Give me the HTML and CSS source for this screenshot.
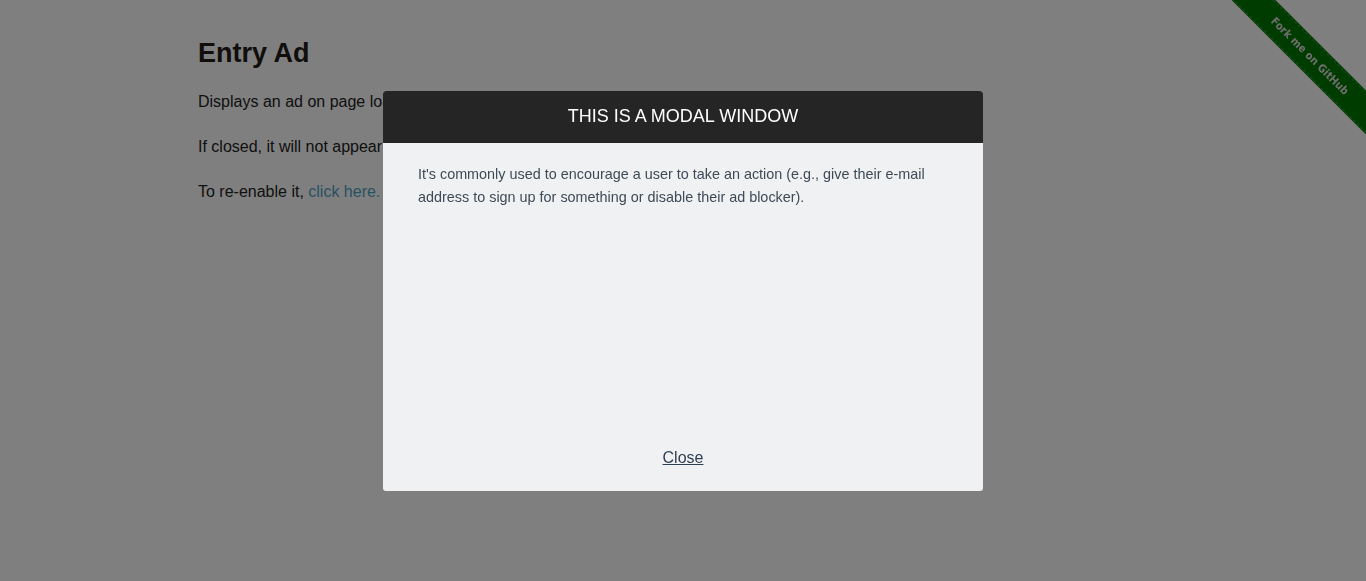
FILE: index.html
```html
<!DOCTYPE html>
<html>
<head>
<meta charset="utf-8">
<link rel="stylesheet" href="styles.css">
</head>
<body>
<div class="ribbon-wrap"><div class="ribbon"><span>Fork me on GitHub</span></div></div>
<div class="page">
  <div class="example">
    <h3 class="title">Entry Ad</h3>
    <p class="para">Displays an ad on page load.</p>
    <p class="para">If closed, it will not appear on subsequent page loads.</p>
    <p class="para">To re-enable it, <a class="link" href="#">click here.</a></p>
  </div>
</div>
<div class="overlay">
  <div class="modal">
    <div class="modal-title"><h3 class="modal-heading">THIS IS A MODAL WINDOW</h3></div>
    <div class="modal-body">
      <p class="modal-text">It's commonly used to encourage a user to take an action (e.g., give their e-mail address to sign up for something or disable their ad blocker).</p>
    </div>
    <div class="modal-footer"><a class="close-link" href="#">Close</a></div>
  </div>
</div>
</body>
</html>
```

FILE: styles.css
```css
html, body {
  margin: 0;
  padding: 0;
  height: 100%;
  overflow: hidden;
  background: #fff;
  font-family: "Liberation Sans", Arial, sans-serif;
  color: #222;
}

.page {
  padding: 0 0 0 198px;
}

.example {
  padding-top: 36px;
}

.title {
  margin: 0 0 23px;
  font-size: 27px;
  line-height: 34px;
  font-weight: bold;
  color: #221a16;
}

.para {
  margin: 0 0 27px;
  font-size: 16px;
  line-height: 18px;
  color: #222;
}

.link {
  color: #4fa4c6;
  text-decoration: none;
}

.ribbon-wrap {
  position: fixed;
  top: 0;
  right: 0;
  width: 149px;
  height: 149px;
  overflow: hidden;
}

.ribbon {
  position: absolute;
  left: -18px;
  top: 41px;
  width: 220px;
  height: 29px;
  transform: rotate(45deg);
  background: #007800;
  box-sizing: border-box;
  border-top: 1px dashed #3a9a3a;
  border-bottom: 1px dashed #3a9a3a;
  box-shadow: 0 0 0 1px #007800;
  display: flex;
  align-items: center;
  justify-content: center;
}

.ribbon span {
  font-family: "DejaVu Sans Condensed", "DejaVu Sans", sans-serif;
  font-weight: bold;
  font-size: 11px;
  color: #dcdcdc;
  padding-left: 2px;
}

.overlay {
  position: fixed;
  inset: 0;
  background: rgba(0, 0, 0, 0.5);
  display: flex;
  justify-content: center;
  align-items: flex-start;
  padding-top: 91px;
}

.modal {
  width: 600px;
  height: 400px;
  background: #f0f1f2;
  border-radius: 3px;
  overflow: hidden;
  display: flex;
  flex-direction: column;
}

.modal-title {
  background: #252525;
  height: 52px;
  display: flex;
  align-items: center;
  justify-content: center;
}

.modal-heading {
  margin: 0 0 2px;
  color: #fff;
  font-size: 18px;
  font-weight: normal;
  line-height: 22px;
}

.modal-body {
  flex: 1;
  padding: 20px 35px 0;
}

.modal-text {
  margin: 0;
  font-size: 14.4px;
  line-height: 23px;
  color: #3f4a57;
}

.modal-footer {
  text-align: center;
  padding-bottom: 24px;
}

.close-link {
  font-size: 16px;
  line-height: 18px;
  color: #2f3f52;
  text-decoration: underline;
}
```
